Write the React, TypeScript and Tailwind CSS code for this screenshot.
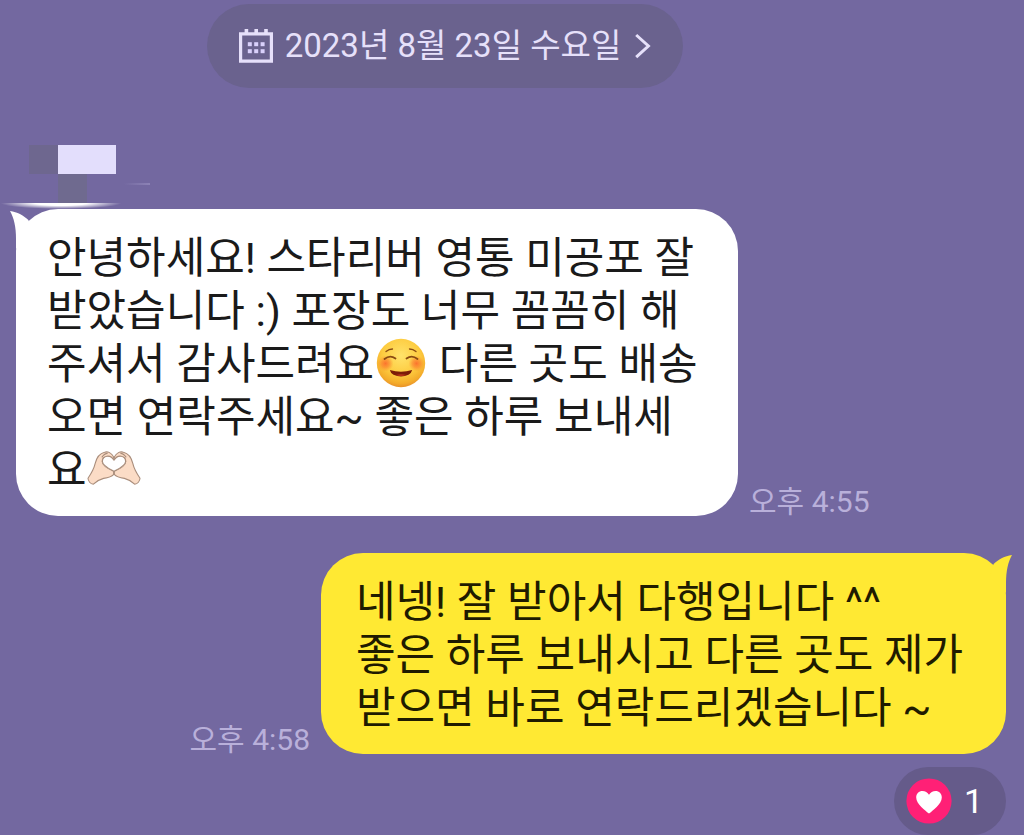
import type { ReactNode } from "react";

function CalendarIcon() {
  return (
    <svg width="34" height="34" viewBox="0 0 34 34" fill="none" aria-hidden="true">
      <path d="M1.6 4.8H32.4V32.2H1.6Z" stroke="#e6e0fa" strokeWidth="3.2" />
      <path d="M7.4 0V5M17.2 0V5M27 0V5" stroke="#e6e0fa" strokeWidth="3.6" />
      <g fill="#d9d0fb">
        <rect x="8.8" y="13.2" width="4" height="4" />
        <rect x="15.2" y="13.2" width="4" height="4" />
        <rect x="21.6" y="13.2" width="4" height="4" />
        <rect x="8.8" y="20.2" width="4" height="4" />
        <rect x="15.2" y="20.2" width="4" height="4" />
        <rect x="21.6" y="20.2" width="4" height="4" />
      </g>
    </svg>
  );
}

function ChevronIcon() {
  return (
    <svg width="16" height="26" viewBox="0 0 16 26" fill="none" aria-hidden="true">
      <path d="M1.2 2L13.4 13L1.2 24.2" stroke="#e6e0fa" strokeWidth="3" />
    </svg>
  );
}

function SmileEmoji() {
  return (
    <svg
      className="-mb-[3px] -mt-[13px] inline-block align-middle"
      width="54"
      height="50"
      viewBox="0 0 54 50"
      role="img"
      aria-label="😊"
    >
      <defs>
        <radialGradient id="face" cx="0.5" cy="0.35" r="0.65">
          <stop offset="0" stopColor="#ffe36b" />
          <stop offset="0.6" stopColor="#fdcb3f" />
          <stop offset="0.88" stopColor="#f4ac2b" />
          <stop offset="1" stopColor="#e8922a" />
        </radialGradient>
        <radialGradient id="blush">
          <stop offset="0" stopColor="#fb6a2c" stopOpacity="0.9" />
          <stop offset="0.5" stopColor="#fb7a2e" stopOpacity="0.6" />
          <stop offset="1" stopColor="#fb8a2e" stopOpacity="0" />
        </radialGradient>
      </defs>
      <circle cx="27" cy="25" r="24.2" fill="url(#face)" />
      <circle cx="11.5" cy="25.5" r="8" fill="url(#blush)" />
      <circle cx="42.5" cy="25.5" r="8" fill="url(#blush)" />
      <g fill="none" stroke="#8a4b12" strokeLinecap="round">
        <path d="M12 13.5Q15 11 18.5 11M42 13.5Q39 11 35.5 11" strokeWidth="1.3" />
        <path d="M10.5 21Q16 16.5 21.5 20.5M32.5 20.5Q38 16.5 43.5 21" strokeWidth="1.8" />
      </g>
      <path d="M15.8 32Q27 35.4 38.2 32Q37.5 35 34.5 36.8Q27 40 19.5 36.8Q16.5 35 15.8 32Z" fill="#7c1d08" />
      <path d="M21.5 37Q27 35.4 32.5 37Q27 39 21.5 37Z" fill="#b8331a" />
    </svg>
  );
}

function HeartHandsEmoji() {
  return (
    <svg
      className="-mb-[2px] -mt-[14px] inline-block align-middle"
      width="54"
      height="36"
      viewBox="0 0 54 36"
      role="img"
      aria-label="🫶🏻"
    >
      <g fill="#fbdcc6" stroke="#a98d7b" strokeWidth="1.1" strokeLinejoin="round">
        <path d="M26.8 7.2C24.6 3 20.8 1.2 17.6 2.2C12.6 3.4 9.6 7.4 8.2 13.4C7 18.8 4.6 23 1 28.2C1.2 31 3.4 33.8 6.4 34.2C9 31.8 12.4 29.4 16.6 28.4C21 27.8 24.4 27 26.8 24.4L26.8 21.2C22.2 19.2 15.4 15.8 15.2 11.4C15.2 6.2 21.6 4.6 25.6 9.8Z" />
        <path d="M27.2 7.2C29.4 3 33.2 1.2 36.4 2.2C41.4 3.4 44.4 7.4 45.8 13.4C47 18.8 49.4 23 53 28.2C52.8 31 50.6 33.8 47.6 34.2C45 31.8 41.6 29.4 37.4 28.4C33 27.8 29.6 27 27.2 24.4L27.2 21.2C31.8 19.2 38.6 15.8 38.8 11.4C38.8 6.2 32.4 4.6 28.4 9.8Z" />
        <path d="M27 10.2C23.2 3.8 15.6 5.6 15.4 11.4C15.6 15.8 22.4 18.8 27 21.2C31.6 18.8 38.4 15.8 38.6 11.4C38.4 5.6 30.8 3.8 27 10.2Z" fill="#ffffff" />
        <path d="M14.8 7.4Q17.4 3.4 20.6 3.4M39.2 7.4Q36.6 3.4 33.4 3.4M27 21.2V25" fill="none" />
      </g>
    </svg>
  );
}

function HeartBadge() {
  return (
    <svg width="46" height="46" viewBox="0 0 46 46" aria-hidden="true">
      <circle cx="23" cy="23" r="22.6" fill="#ff2076" />
      <path
        d="M23 35.6C19.6 32.6 10.2 26 10.2 19.4C10.2 15.6 13 13 16.4 13C19.2 13 21.6 14.4 23 16.8C24.4 14.4 26.8 13 29.6 13C33 13 35.8 15.6 35.8 19.4C35.8 26 26.4 32.6 23 35.6Z"
        fill="#ffffff"
      />
    </svg>
  );
}

function Tail({ side }: { side: "left" | "right" }) {
  return side === "left" ? (
    <svg className="absolute -left-1.5 top-0 text-white" width="24" height="40" viewBox="0 0 24 40" aria-hidden="true">
      <path d="M0 2C7.4 3 13 6 18.4 11L22 24L6 40V30C6 18 4 9 0 2Z" fill="currentColor" />
    </svg>
  ) : (
    <svg className="absolute -right-1.5 top-0 text-[#ffe933]" width="24" height="40" viewBox="0 0 24 40" aria-hidden="true">
      <path d="M24 2C16.6 3 11 6 5.6 11L2 24L18 40V30C18 18 20 9 24 2Z" fill="currentColor" />
    </svg>
  );
}

function Time({ children }: { children: ReactNode }) {
  return <time className="shrink-0 text-[30px] leading-7 text-[#b9b0da]">{children}</time>;
}

function RedactedSender() {
  return (
    <div className="relative grid h-[64px] grid-cols-[29px_29px_29px] grid-rows-[29px_29px] pl-[29px]" aria-hidden="true">
      <span className="bg-[#6e678f]" />
      <span className="col-span-2 bg-[#e3defc]" />
      <span className="col-start-2 bg-[#6f6a8f]" />
      <span className="absolute left-[124px] top-[38px] h-[2px] w-[26px] bg-linear-to-r from-[#7368a0] to-[#8d83b6]" />
      <span className="absolute bottom-0 left-0 h-[6px] w-[122px] bg-radial-[ellipse_at_top] from-white from-30% to-transparent to-70%" />
    </div>
  );
}

export default function App() {
  return (
    <main className="min-h-screen overflow-hidden bg-[#7368a0] pt-1 font-['Roboto','Noto_Sans_CJK_KR',sans-serif]">
      <header className="flex justify-center pr-[134px]">
        <button
          type="button"
          className="flex h-[84px] items-center rounded-full bg-[#6a628e] px-8 text-[33px] leading-10 text-[#e6e0fa]"
        >
          <CalendarIcon />
          <span className="ml-3 mr-3.5">2023년 8월 23일 수요일</span>
          <ChevronIcon />
        </button>
      </header>

      <section className="mt-[57px]">
        <RedactedSender />
        <div className="flex items-end gap-[11px] pl-4">
          <div className="relative max-w-[722px] rounded-[42px] bg-white pb-[19px] pl-[31px] pr-9 pt-[23px]">
            <Tail side="left" />
            <p className="relative text-[43px] leading-[53px] text-[#1a1a1a]">
              안녕하세요! 스타리버 영통 미공포 잘 받았습니다 :) 포장도 너무 꼼꼼히 해주셔서 감사드려요
              <SmileEmoji /> 다른 곳도 배송오면 연락주세요~ 좋은 하루 보내세요
              <HeartHandsEmoji />
            </p>
          </div>
          <Time>오후 4:55</Time>
        </div>
      </section>

      <section className="mt-[37px] flex flex-col items-end pr-[18px]">
        <div className="flex items-end gap-[11px]">
          <Time>오후 4:58</Time>
          <div className="relative max-w-[685px] rounded-[42px] bg-[#ffe933] pb-[19px] pl-[35px] pr-10 pt-[23px]">
            <Tail side="right" />
            <p className="relative text-[43px] leading-[53px] text-[#1f1b00]">
              네넹! 잘 받아서 다행입니다 ^^
              <br />
              좋은 하루 보내시고 다른 곳도 제가 받으면 바로 연락드리겠습니다 ~
            </p>
          </div>
        </div>
        <button
          type="button"
          aria-label="하트 1"
          className="mt-[13px] flex h-[68px] w-[112px] items-center gap-3 rounded-full bg-[#655b8a] pl-3 text-[34px] leading-10 text-white"
        >
          <HeartBadge />
          <span>1</span>
        </button>
      </section>
    </main>
  );
}
